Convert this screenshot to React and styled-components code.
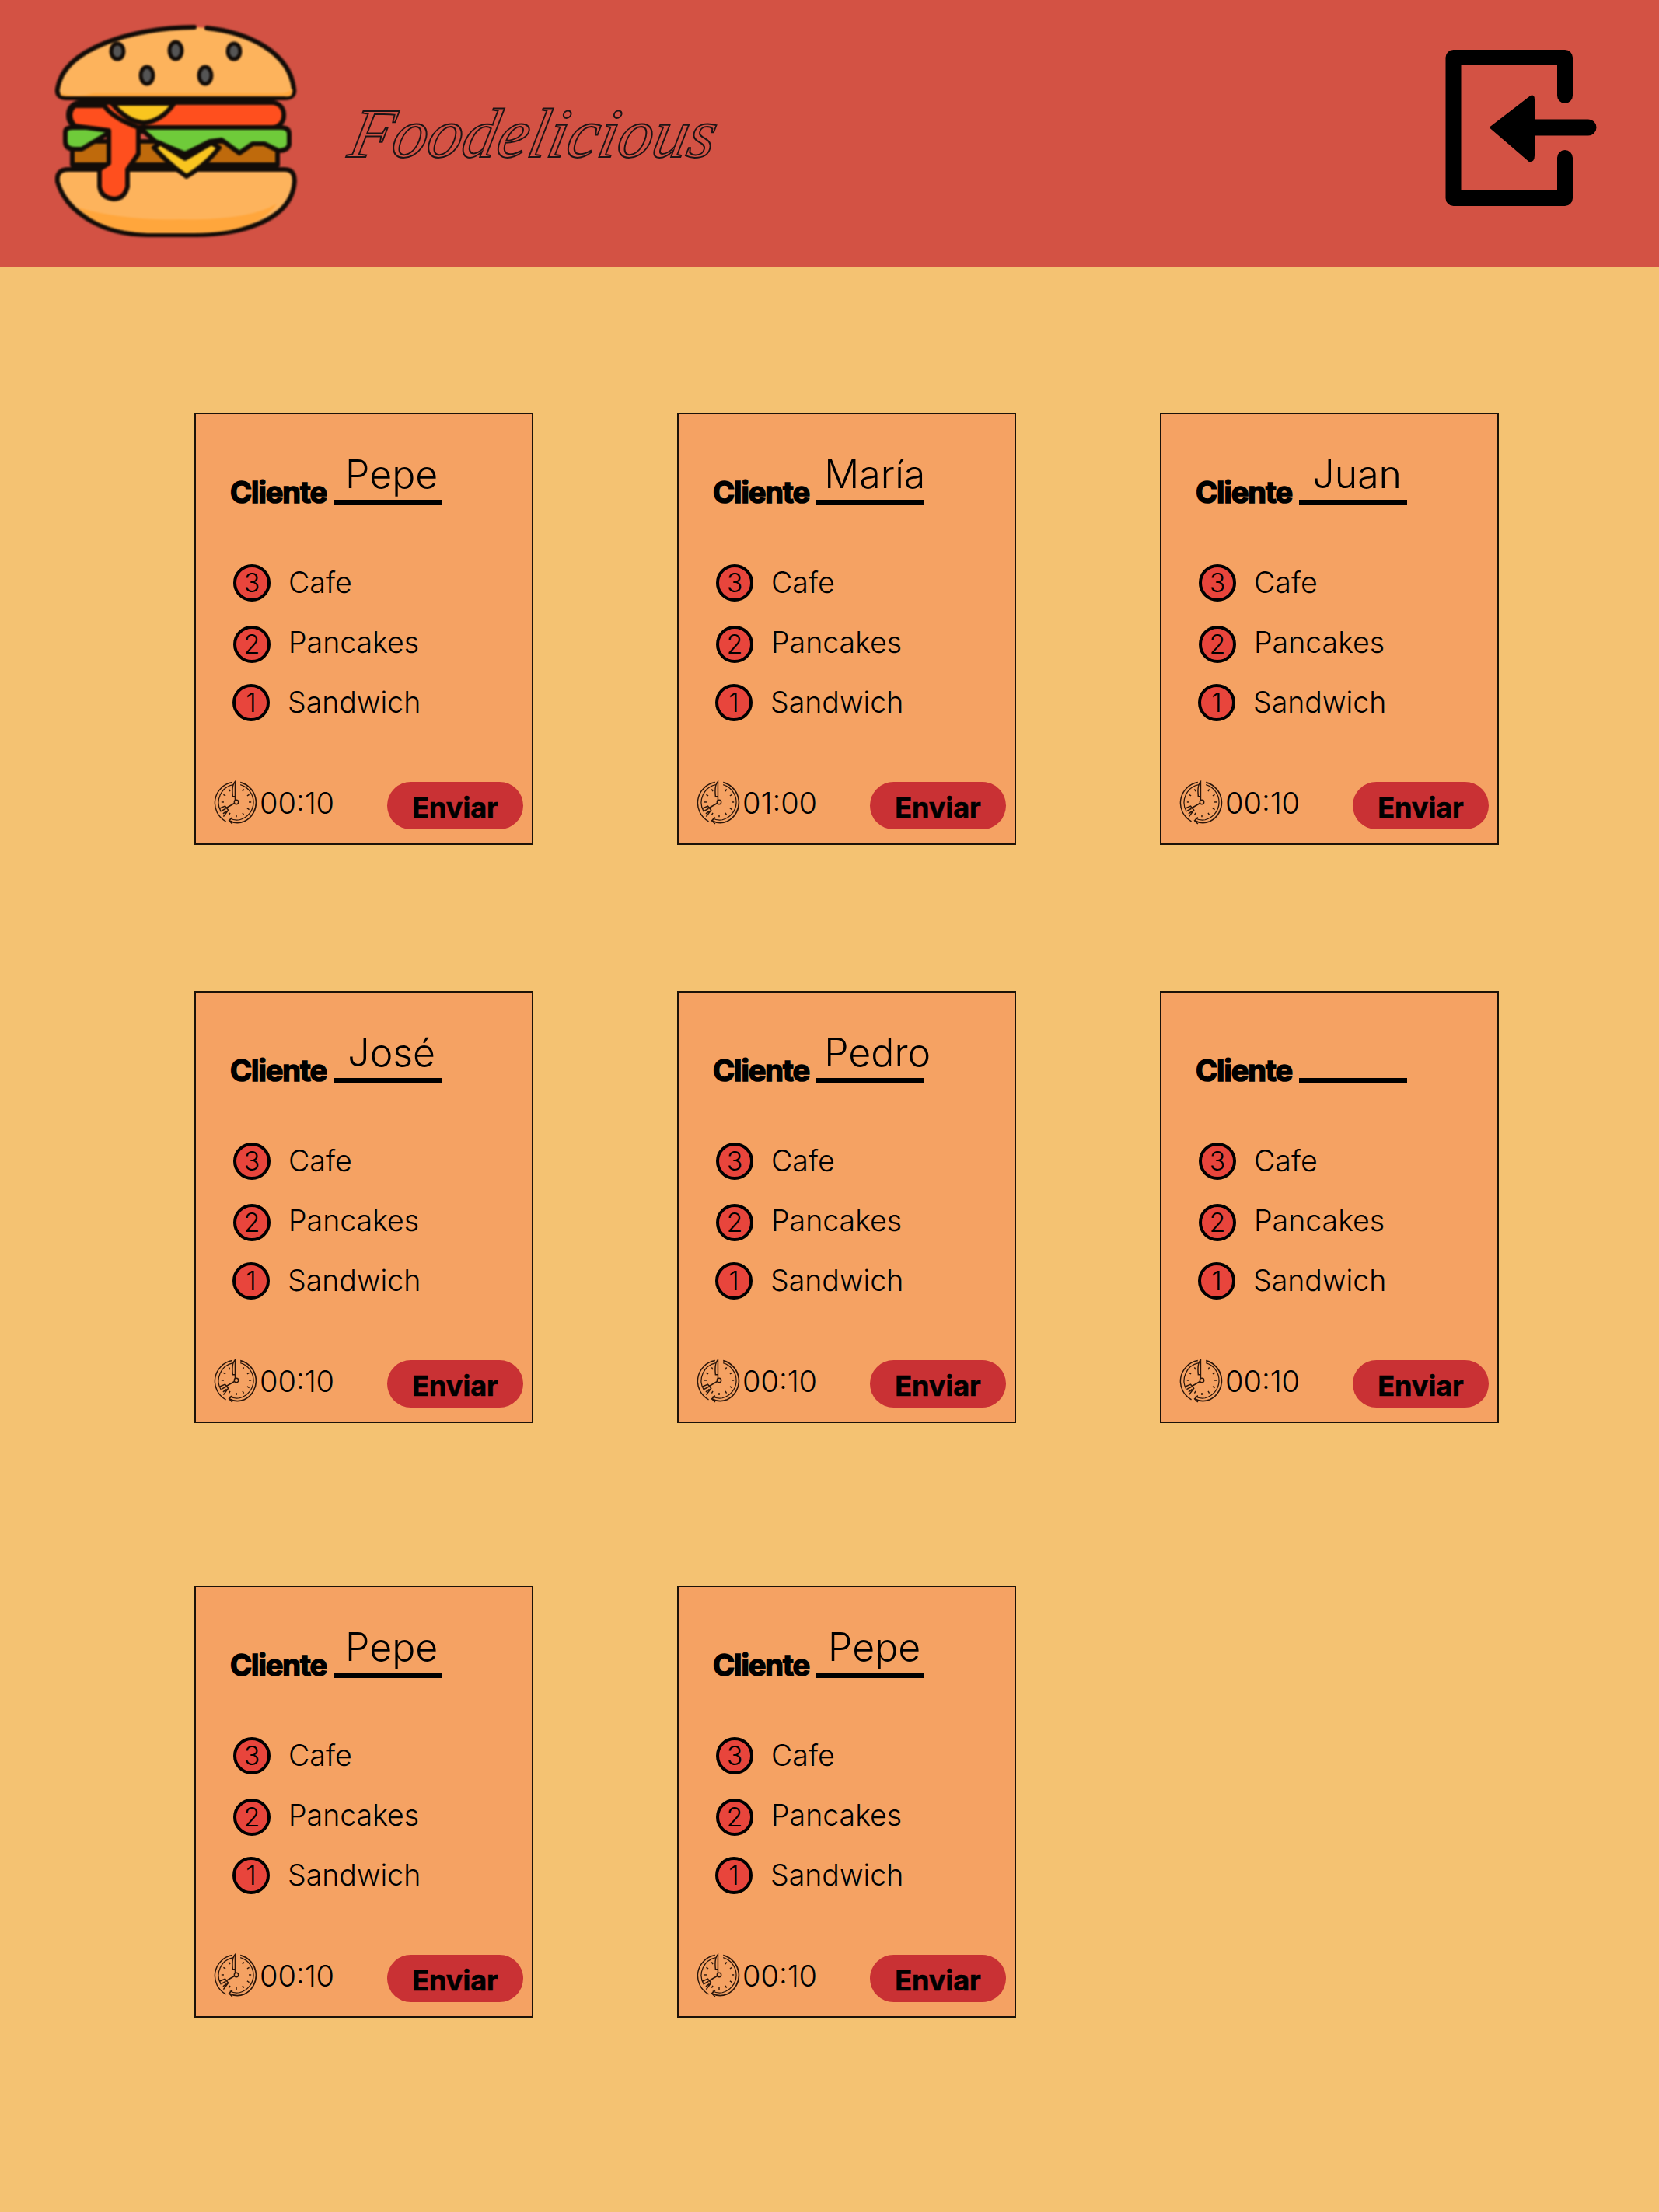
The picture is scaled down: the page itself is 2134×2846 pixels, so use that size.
import React from "react";
import styled, { createGlobalStyle } from "styled-components";

const GlobalStyle = createGlobalStyle`
  html, body {
    margin: 0;
    padding: 0;
    background: #f4c272;
    font-family: "Inter", "Liberation Sans", sans-serif;
    color: #000;
  }
`;

const Page = styled.div`
  width: 2134px;
  min-height: 2846px;
  background: #f4c272;
`;

const Header = styled.header`
  height: 343px;
  background: #d35244;
  display: flex;
  align-items: center;
  padding: 0 64px 0 60px;
  box-sizing: border-box;
`;

const Brand = styled.div`
  display: flex;
  align-items: center;
  gap: 62px;
  flex: 1;
`;

const BurgerSvg = styled.svg`
  width: 330px;
  height: 300px;
  filter: blur(0.8px);
`;

const BrandName = styled.span`
  font-family: "Liberation Serif", serif;
  font-style: italic;
  font-size: 90px;
  letter-spacing: 0;
  color: transparent;
  -webkit-text-stroke: 2px #1c1416;
  transform: skewX(-12deg);
`;

const ExitSvg = styled.svg`
  width: 220px;
  height: 220px;
  margin-bottom: 12px;
`;

const Board = styled.main`
  padding: 188px 0 0 250px;
`;

const CardRow = styled.section`
  display: flex;
  gap: 185px;
  margin-bottom: ${(p) => p.$below}px;
`;

const Card = styled.article`
  width: 436px;
  height: 556px;
  box-sizing: border-box;
  border: 2px solid #1c1208;
  background: #f5a263;
  display: flex;
  flex-direction: column;
`;

const Title = styled.div`
  display: flex;
  align-items: flex-end;
  gap: 9px;
  height: 80px;
  margin: 37px 0 0 44px;
`;

const TitleLabel = styled.span`
  font-size: 38px;
  line-height: 38px;
  font-weight: 700;
  letter-spacing: -1px;
  -webkit-text-stroke: 1.6px #000;
  margin-bottom: -2px;
`;

const NameLine = styled.span`
  width: 139px;
  box-sizing: border-box;
  padding: 0 0 4px 10px;
  border-bottom: 7px solid #000;
  font-size: 50px;
  line-height: 58px;
  font-weight: 300;
  text-align: center;
  white-space: nowrap;
`;

const Items = styled.ul`
  list-style: none;
  margin: 61px 0 0;
  padding: 0 0 0 46px;
`;

const Item = styled.li`
  height: 77px;
  display: flex;
  align-items: center;
  font-size: 37.5px;
  font-weight: 300;
`;

const Badge = styled.span`
  width: ${(p) => p.$size}px;
  height: ${(p) => p.$size}px;
  margin: ${(p) => p.$drop}px ${(p) => p.$space}px 0 ${(p) => p.$indent}px;
  box-sizing: border-box;
  border: 4.5px solid #000;
  border-radius: 50%;
  background: #e8453c;
  display: flex;
  align-items: center;
  justify-content: center;
  font-size: 34px;
  font-weight: 300;
`;

const CardFooter = styled.footer`
  margin-top: auto;
  padding: 0 11px 18px 23px;
  display: flex;
  align-items: center;
  justify-content: space-between;
`;

const Timer = styled.div`
  display: flex;
  align-items: center;
  gap: 1px;
  font-size: 38px;
  font-weight: 300;
  margin-top: -8px;
`;

const ClockSvg = styled.svg`
  width: 58px;
  height: 58px;
`;

const SendButton = styled.button`
  width: 175px;
  height: 61px;
  border: none;
  border-radius: 31px;
  background: #c93134;
  color: #000;
  font-family: inherit;
  font-size: 36px;
  font-weight: 700;
  -webkit-text-stroke: 0.6px #000;
  padding: 4px 0 0;
`;

const Burger = () => (
  <BurgerSvg viewBox="0 0 330 300">
    <g stroke="#120c08" strokeWidth="6" strokeLinejoin="round" strokeLinecap="round">
      <path d="M190 13 C110 14 22 40 14 92 Q12 104 26 104 H306 Q320 104 318 92 C312 45 260 20 206 14" fill="#fdb35c" />
      <path d="M18 98 Q40 104 60 98 H300 Q312 98 316 92 Q318 104 306 102 H26 Q16 102 18 98Z" fill="#ffa63c" stroke="none" />
      <path d="M33 190 V160 H297 V190Z" fill="#bf6a0c" />
      <rect x="28" y="110" width="277" height="32" rx="15" fill="#ff4f1e" />
      <path d="M24 148 Q24 142 34 142 H300 Q312 142 312 150 V164 Q310 172 298 172 L280 163 L265 163 L248 175 L225 158 L210 160 L178 176 L140 160 L125 147 L78 150 L45 170 H36 Q24 170 24 160Z" fill="#6fcb3a" />
      <path d="M28 196 H306 Q322 196 318 218 C310 262 250 280 190 280 H130 C70 280 25 250 14 212 Q12 196 28 196Z" fill="#fdb35c" />
      <path d="M40 245 Q100 262 170 260 Q260 262 296 240 Q270 278 190 278 H130 Q70 276 40 245Z" fill="#ffa63c" stroke="none" />
      <path d="M84 111 Q104 135 125 136 Q148 134 164 111Z" fill="#f9c51f" />
      <path d="M138 168 L146 162 L178 182 L212 162 L222 168 Q205 190 180 205 Q158 190 138 168Z" fill="#f9c51f" />
      <path d="M36 114 H74 Q85 130 118 142 V176 L104 196 V218 Q100 234 86 234 Q70 232 68 218 V196 L80 188 V146 Q50 142 36 140 Q24 126 36 114Z" fill="#ff4f1e" />
    </g>
    <g fill="#555" stroke="#120c08" strokeWidth="5">
      <ellipse cx="91" cy="44" rx="8" ry="10" />
      <ellipse cx="166" cy="43" rx="8" ry="11" />
      <ellipse cx="241" cy="44" rx="8" ry="10" />
      <ellipse cx="129" cy="75" rx="8" ry="11" />
      <ellipse cx="204" cy="75" rx="8" ry="11" />
    </g>
  </BurgerSvg>
);

const ExitIcon = () => (
  <ExitSvg viewBox="0 0 220 220">
    <path
      d="M163 67 V18 H19.5 V199 H163 V147"
      fill="none"
      stroke="#000"
      strokeWidth="20"
      strokeLinecap="round"
      strokeLinejoin="round"
    />
    <path d="M67 108 L119 68 Q123 66 123 72 V144 Q123 152 117 151Z" fill="#000" stroke="#000" strokeWidth="2" strokeLinejoin="round" />
    <path d="M118 108 H193" fill="none" stroke="#000" strokeWidth="21" strokeLinecap="round" />
  </ExitSvg>
);

const ticks = [30, 60, 90, 120, 150, 180, 210, 270, 300, 330];

const ClockIcon = () => (
  <ClockSvg viewBox="0 0 56 56" fill="none" stroke="#2a150a">
    <path d="M23 2.5 A26 26 0 0 0 15 51" strokeWidth="1.4" />
    <path d="M33 2.5 A26 26 0 0 1 38 51 Q28 55 19 50" strokeWidth="1.6" />
    <path d="M24 5.5 A22.5 22.5 0 0 0 9 39" strokeWidth="1.2" />
    <path d="M33 5.5 A22.5 22.5 0 0 1 32 49 Q25 50 20 47" strokeWidth="1.2" />
    <path d="M23 54 L19 50 L23 46" strokeWidth="1.5" />
    {ticks.map((deg) => (
      <line
        key={deg}
        x1="28"
        y1="8.5"
        x2="28"
        y2="11.5"
        strokeWidth="1.4"
        transform={`rotate(${deg} 28 27)`}
      />
    ))}
    <circle cx="28" cy="27" r="2.6" strokeWidth="1.4" />
    <path d="M26.5 24.5 V1.5 Q22 6 23.5 20 L26 20" strokeWidth="1.4" />
    <path d="M25.5 28.5 L16 34 M7 35 L14 32 L18 37 L12 45 M9.5 38 L15 35 M11.5 41.5 L16 38" strokeWidth="1.5" />
  </ClockSvg>
);

const items = [
  { n: 3, label: "Cafe", size: 48, indent: 2, space: 23, drop: 0 },
  { n: 2, label: "Pancakes", size: 48, indent: 2, space: 23, drop: 4 },
  { n: 1, label: "Sandwich", size: 48, indent: 1, space: 23, drop: 0 },
];

const OrderCard = ({ name, time }) => (
  <Card>
    <Title>
      <TitleLabel>Cliente</TitleLabel>
      <NameLine>{name || "\u00a0"}</NameLine>
    </Title>
    <Items>
      {items.map((item) => (
        <Item key={item.n}>
          <Badge $size={item.size} $indent={item.indent} $space={item.space} $drop={item.drop}>
            {item.n}
          </Badge>
          {item.label}
        </Item>
      ))}
    </Items>
    <CardFooter>
      <Timer>
        <ClockIcon />
        {time}
      </Timer>
      <SendButton>Enviar</SendButton>
    </CardFooter>
  </Card>
);

const rows = [
  {
    below: 188,
    orders: [
      { name: "Pepe", time: "00:10" },
      { name: "María", time: "01:00" },
      { name: "Juan", time: "00:10" },
    ],
  },
  {
    below: 209,
    orders: [
      { name: "José", time: "00:10" },
      { name: "Pedro", time: "00:10" },
      { name: "", time: "00:10" },
    ],
  },
  {
    below: 0,
    orders: [
      { name: "Pepe", time: "00:10" },
      { name: "Pepe", time: "00:10" },
    ],
  },
];

export default function App() {
  return (
    <Page>
      <GlobalStyle />
      <Header>
        <Brand>
          <Burger />
          <BrandName>Foodelicious</BrandName>
        </Brand>
        <ExitIcon />
      </Header>
      <Board>
        {rows.map((row, index) => (
          <CardRow key={index} $below={row.below}>
            {row.orders.map((order, i) => (
              <OrderCard key={i} name={order.name} time={order.time} />
            ))}
          </CardRow>
        ))}
      </Board>
    </Page>
  );
}
